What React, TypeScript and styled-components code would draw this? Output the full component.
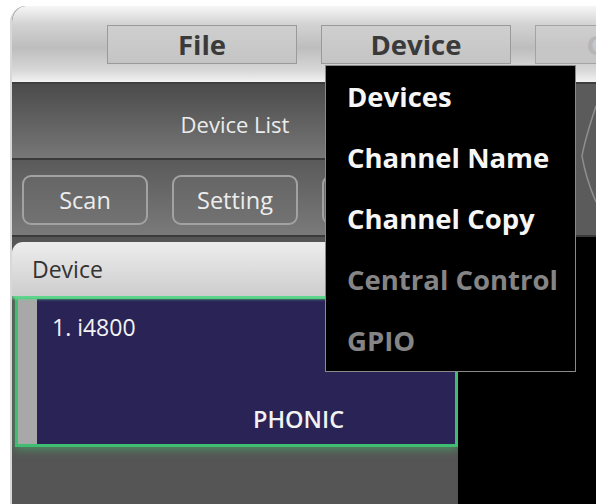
import styled, { createGlobalStyle } from "styled-components"

const GlobalStyle = createGlobalStyle`
    html, body {
        margin: 0;
        padding: 0;
        background: #ffffff;
        font-family: 'Open Sans', 'Liberation Sans', sans-serif;
    }
`

const Window = styled.div`
    position: relative;
    margin: 6px 0 0 10px;
    width: 586px;
    height: 498px;
    overflow: hidden;
    border-top-left-radius: 16px;
    border-left: 2px solid #d8d8d8;
    box-sizing: border-box;
    background: #000;
    display: flex;
    flex-direction: column;
`

const MenuBar = styled.div`
    height: 78px;
    flex-shrink: 0;
    display: flex;
    align-items: flex-start;
    gap: 24px;
    padding: 19px 0 0 95px;
    box-sizing: border-box;
    background: linear-gradient(to bottom, #f6f6f6 0%, #d2d2d2 25%, #bdbdbd 55%, #d8d8d8 85%, #f2f2f2 100%);
    border-bottom: 2px solid #3e3e3e;
`

const MenuButton = styled.div<{ faded?: boolean }>`
    width: 190px;
    height: 39px;
    flex-shrink: 0;
    box-sizing: border-box;
    border: 1px solid #9a9a9a;
    background: linear-gradient(to bottom, #cfcfcf, #c4c4c4);
    display: flex;
    align-items: center;
    justify-content: center;
    font-weight: 700;
    font-size: 27.5px;
    color: ${p => p.faded ? "#b4b4b4" : "#3a3a3a"};
    opacity: ${p => p.faded ? 0.8 : 1};
`

const TopSection = styled.div`
    display: flex;
    flex-shrink: 0;
`

const TopColumn = styled.div`
    flex: 1;
    display: flex;
    flex-direction: column;
`

const Header = styled.div`
    height: 76px;
    display: flex;
    align-items: center;
    background: linear-gradient(to bottom, #4b4b4b, #777777);
    border-bottom: 2px solid #3a3a3a;
    box-sizing: border-box;
`

const HeaderTitle = styled.div`
    width: 446px;
    text-align: center;
    color: #ececec;
    font-size: 22px;
    padding-top: 6px;
`

const Toolbar = styled.div`
    height: 77px;
    display: flex;
    gap: 24px;
    padding: 15px 0 0 10px;
    box-sizing: border-box;
    background: linear-gradient(to bottom, #5a5a5a, #7a7a7a);
    border-bottom: 2px solid #3a3a3a;
`

const ToolButton = styled.div`
    width: 126px;
    height: 50px;
    flex-shrink: 0;
    box-sizing: border-box;
    border: 2px solid #a2a2a2;
    border-radius: 9px;
    background: linear-gradient(to bottom, #666, #727272);
    display: flex;
    align-items: center;
    justify-content: center;
    color: #ededed;
    font-size: 23.5px;
`

const ScrollStrip = styled.div`
    width: 20px;
    background: #5b5b5b;
    border-bottom: 2px solid #3a3a3a;

    svg {
        display: block;
    }
`

const Body = styled.div`
    flex: 1;
    display: flex;
`

const DevicePanel = styled.div`
    width: 446px;
    background: #555555;
    display: flex;
    flex-direction: column;
    padding-top: 5px;
`

const TabHeader = styled.div`
    height: 54px;
    flex-shrink: 0;
    display: flex;
    align-items: center;
    padding-left: 20px;
    border-top-left-radius: 11px;
    background: linear-gradient(to bottom, #ededed, #cdcdcd);
    color: #333;
    font-size: 23px;
    box-shadow: 0 3px 3px #62d98f;
    position: relative;
    z-index: 1;
`

const DeviceCard = styled.div`
    margin: 1px 0 0 3px;
    height: 145px;
    flex-shrink: 0;
    display: flex;
    border: 3px solid #3fbd70;
    border-top-width: 2px;
    box-shadow: 0 3px 8px rgba(70, 190, 110, 0.5);
`

const CardStrip = styled.div`
    width: 19px;
    background: #a8a8a8;
`

const CardBody = styled.div`
    flex: 1;
    background: #2a2356;
    display: flex;
    flex-direction: column;
    justify-content: space-between;
    padding: 12px 0 9px 15px;
    color: #f2f2f2;
`

const CardName = styled.div`
    font-size: 23px;
`

const CardBrand = styled.div`
    font-size: 23.5px;
    font-weight: 600;
    padding-left: 201px;
`

const SidePanel = styled.div`
    flex: 1;
    background: #000;
`

const Dropdown = styled.div`
    position: absolute;
    left: 313px;
    top: 59px;
    width: 251px;
    box-sizing: border-box;
    background: #000;
    border: 1px solid #8a8a8a;
    z-index: 5;
`

const DropItem = styled.div<{ disabled?: boolean }>`
    height: 61px;
    display: flex;
    align-items: center;
    padding-left: 21px;
    font-weight: 700;
    font-size: 27.5px;
    white-space: nowrap;
    color: ${p => p.disabled ? "#858585" : "#f6f6f6"};
`

function Chevron() {
    return (
        <svg width="20" height="151" viewBox="0 0 20 151">
            <path d="M20 22 Q 9 55 6 72 Q 10 95 20 118" fill="none" stroke="#8e8e8e" strokeWidth="1.5" />
        </svg>
    )
}

const menuItems = [
    { label: "Devices" },
    { label: "Channel Name" },
    { label: "Channel Copy" },
    { label: "Central Control", disabled: true },
    { label: "GPIO", disabled: true },
]

export default function App() {
    return (
        <>
            <GlobalStyle />
            <Window>
                <MenuBar>
                    <MenuButton>File</MenuButton>
                    <MenuButton>Device</MenuButton>
                    <MenuButton faded>Config</MenuButton>
                </MenuBar>
                <TopSection>
                    <TopColumn>
                        <Header>
                            <HeaderTitle>Device List</HeaderTitle>
                        </Header>
                        <Toolbar>
                            <ToolButton>Scan</ToolButton>
                            <ToolButton>Setting</ToolButton>
                            <ToolButton />
                        </Toolbar>
                    </TopColumn>
                    <ScrollStrip><Chevron /></ScrollStrip>
                </TopSection>
                <Body>
                    <DevicePanel>
                        <TabHeader>Device</TabHeader>
                        <DeviceCard>
                            <CardStrip />
                            <CardBody>
                                <CardName>1. i4800</CardName>
                                <CardBrand>PHONIC</CardBrand>
                            </CardBody>
                        </DeviceCard>
                    </DevicePanel>
                    <SidePanel />
                </Body>
                <Dropdown>
                    {menuItems.map(item => (
                        <DropItem key={item.label} disabled={item.disabled}>{item.label}</DropItem>
                    ))}
                </Dropdown>
            </Window>
        </>
    )
}
